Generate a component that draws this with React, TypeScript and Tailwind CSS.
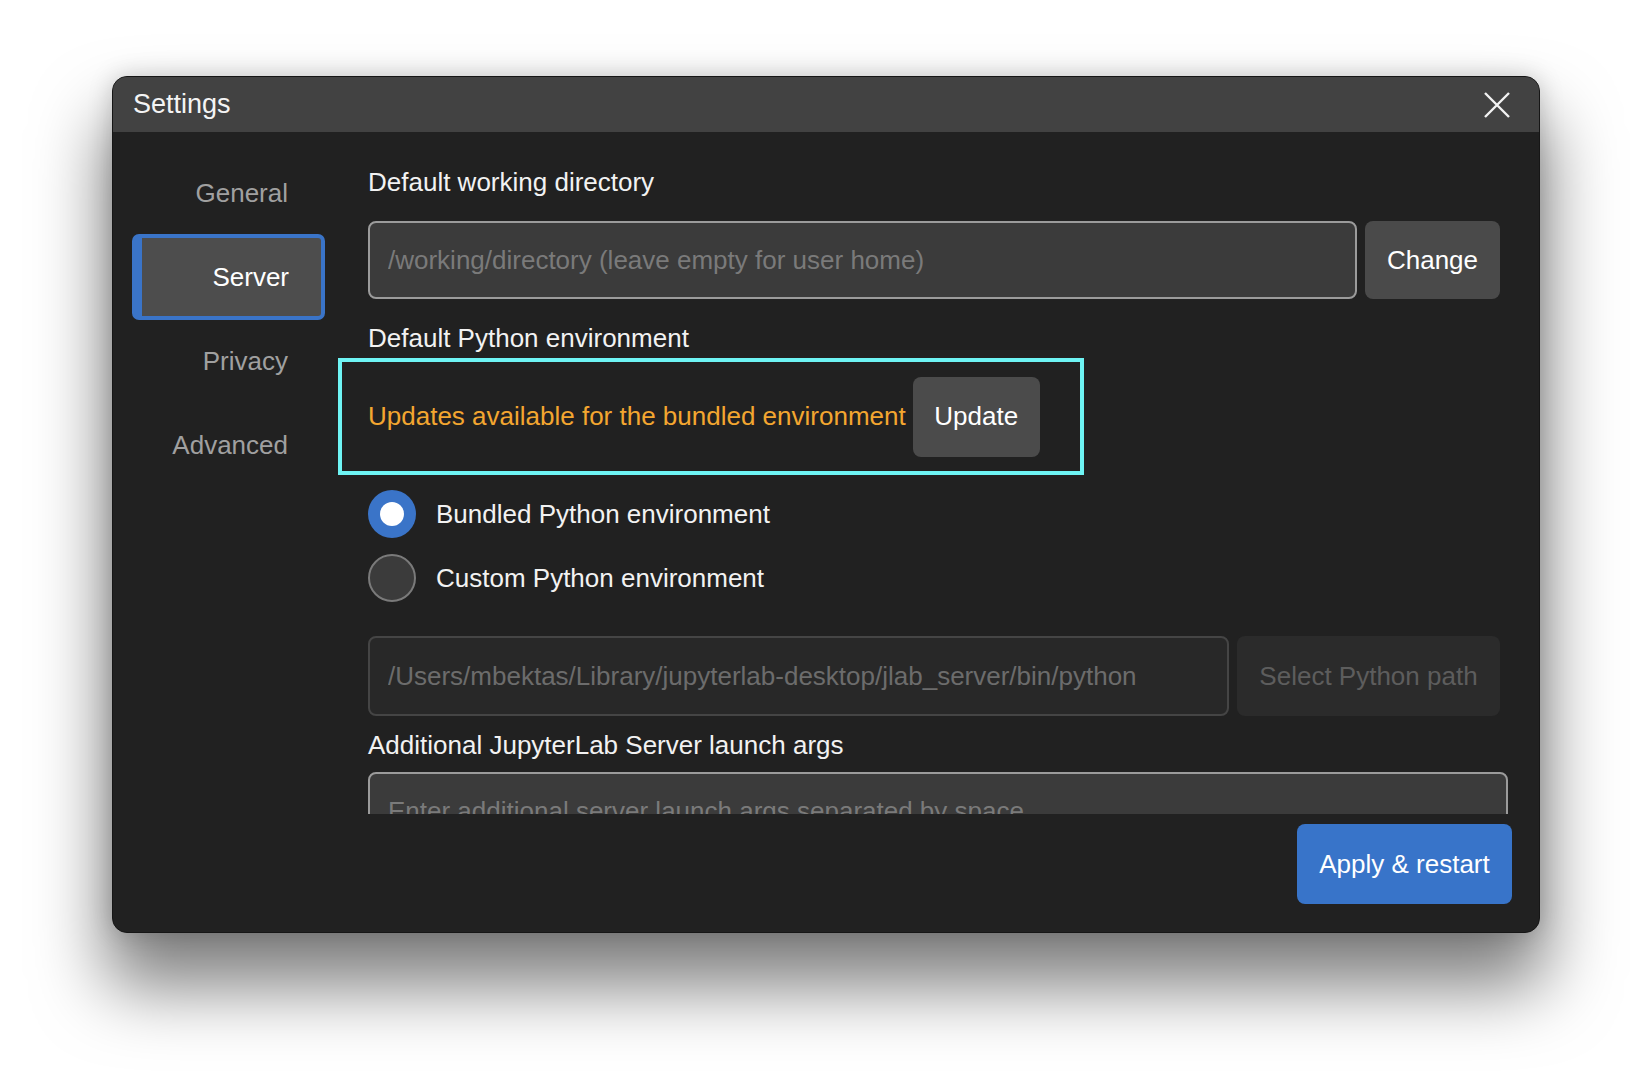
import { useState } from 'react'

const font = { fontFamily: '"Liberation Sans", Arial, sans-serif' }

const tabs = ['General', 'Server', 'Privacy', 'Advanced']

function CloseIcon() {
  return (
    <svg width="26" height="26" viewBox="0 0 26 26" fill="none">
      <path d="M1 1L25 25M25 1L1 25" stroke="#f2f2f2" strokeWidth="2.4" strokeLinecap="butt" />
    </svg>
  )
}

function Radio({ checked, label }: { checked: boolean; label: string }) {
  return (
    <label className="flex items-center h-[48px] gap-[20px] cursor-pointer">
      {checked ? (
        <span className="w-[48px] h-[48px] rounded-full bg-[#3a74c8] flex items-center justify-center">
          <span className="w-[24px] h-[24px] rounded-full bg-white" />
        </span>
      ) : (
        <span className="w-[48px] h-[48px] rounded-full bg-[#3b3b3b] border-2 border-[#7a7a7a]" />
      )}
      <span className="text-[26px] leading-[30px] text-[#f2f2f2]">{label}</span>
    </label>
  )
}

export default function App() {
  const [active, setActive] = useState('Server')
  const [bundled, setBundled] = useState(true)

  return (
    <div className="w-[1652px] h-[1082px] bg-white pt-[76px] pl-[112px] overflow-hidden" style={font}>
      <div className="w-[1428px] h-[857px] rounded-[15px] border border-[#161616] bg-[#212121] overflow-hidden flex flex-col shadow-[0_48px_70px_6px_rgba(0,0,0,0.5),0_0_24px_rgba(0,0,0,0.18)]">
        {/* title bar */}
        <div className="h-[55px] shrink-0 bg-[#424242] flex items-center justify-between pl-[20px] pr-[29px]">
          <span className="text-[27px] text-[#f4f4f4]">Settings</span>
          <button className="w-[26px] h-[26px] flex items-center justify-center">
            <CloseIcon />
          </button>
        </div>

        <div className="h-[682px] shrink-0 flex overflow-hidden">
          {/* sidebar */}
          <div className="pl-[19px] pt-[19px] w-[212px] shrink-0 flex flex-col">
            {tabs.map(t =>
              t === active ? (
                <div
                  key={t}
                  className="h-[86px] shrink-0 -my-[1px] w-[193px] bg-[#4d4d4d] border-l-[10px] border-y-4 border-r-4 border-[#3a74c8] rounded-[7px] flex items-center justify-end pr-[32px] text-[26px] text-white"
                >
                  {t}
                </div>
              ) : (
                <div
                  key={t}
                  onClick={() => setActive(t)}
                  className="h-[84px] shrink-0 w-[193px] flex items-center justify-end pr-[37px] text-[26px] text-[#a0a0a0] cursor-pointer"
                >
                  {t}
                </div>
              )
            )}
          </div>

          {/* content */}
          <div className="ml-[43px] w-[1132px] shrink-0 pt-[35px]">
            <div className="text-[26px] leading-[30px] text-[#f2f2f2]">Default working directory</div>
            <div className="mt-[24px] flex gap-[8px] h-[78px]">
              <input
                className="flex-1 min-w-0 h-full bg-[#3b3b3b] border-2 border-[#9b9b9b] rounded-[8px] px-[18px] text-[26px] text-white placeholder:text-[#7a7a7a] outline-none"
                placeholder="/working/directory (leave empty for user home)"
                style={font}
              />
              <button className="w-[135px] h-full bg-[#4a4a4a] rounded-[8px] text-[26px] text-white" style={font}>
                Change
              </button>
            </div>

            <div className="mt-[24px] text-[26px] leading-[30px] text-[#f2f2f2]">Default Python environment</div>
            <div className="mt-[5px] -ml-[30px] w-[746px] h-[117px] border-4 border-[#6ef4f4] flex items-center pl-[26px] gap-[7px]">
              <span className="text-[26px] text-[#f3a630]">Updates available for the bundled environment</span>
              <button className="w-[127px] h-[80px] bg-[#4b4b4b] rounded-[8px] text-[26px] text-white" style={font}>
                Update
              </button>
            </div>

            <div className="mt-[15px] flex flex-col gap-[16px]">
              <div onClick={() => setBundled(true)}>
                <Radio checked={bundled} label="Bundled Python environment" />
              </div>
              <div onClick={() => setBundled(false)}>
                <Radio checked={!bundled} label="Custom Python environment" />
              </div>
            </div>

            <div className="mt-[34px] flex gap-[8px] h-[80px]">
              <input
                disabled
                className="flex-1 min-w-0 h-full bg-[#282828] border-2 border-[#454545] rounded-[8px] px-[18px] text-[26px] text-[#6c6c6c] outline-none"
                value="/Users/mbektas/Library/jupyterlab-desktop/jlab_server/bin/python"
                readOnly
                style={font}
              />
              <button disabled className="w-[263px] h-full bg-[#2b2b2b] rounded-[8px] text-[26px] text-[#5d5d5d]" style={font}>
                Select Python path
              </button>
            </div>

            <div className="mt-[14px] text-[26px] leading-[30px] text-[#f2f2f2]">Additional JupyterLab Server launch args</div>
            <input
              className="block mt-[12px] w-[1140px] h-[78px] bg-[#3b3b3b] border-2 border-[#9b9b9b] rounded-[8px] px-[18px] text-[26px] text-white placeholder:text-[#7a7a7a] outline-none"
              placeholder="Enter additional server launch args separated by space"
              style={font}
            />
          </div>
        </div>

        {/* footer */}
        <div className="flex-1 flex justify-end items-start pt-[10px] pr-[27px]">
          <button className="w-[215px] h-[80px] bg-[#3874c9] rounded-[8px] text-[26px] text-white" style={font}>
            Apply &amp; restart
          </button>
        </div>
      </div>
    </div>
  )
}
